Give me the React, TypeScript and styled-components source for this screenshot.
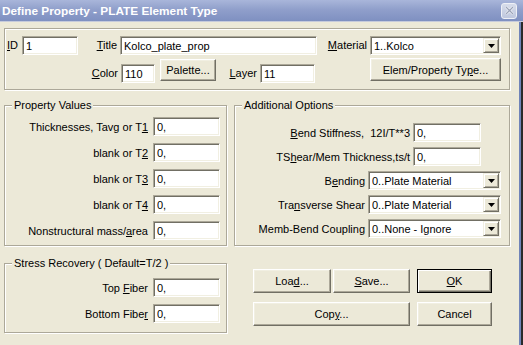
import React from 'react';
import styled, { createGlobalStyle } from 'styled-components';

const GlobalStyle = createGlobalStyle`
  html, body {
    margin: 0;
    padding: 0;
    background: #ece9d8;
  }
  body {
    font-family: "Liberation Sans", Arial, sans-serif;
    font-size: 11px;
    color: #000;
  }
`;

const Window = styled.div`
  width: 523px;
  height: 345px;
  overflow: hidden;
  display: flex;
  flex-direction: column;
  background: #ece9d8;
`;

const TitleBar = styled.div`
  flex: none;
  height: 21px;
  display: flex;
  align-items: center;
  justify-content: space-between;
  padding: 0 6px 0 2px;
  background: linear-gradient(#a9b6da, #909fcb 45%, #7f90c1);
  border-bottom: 1px solid #c6cbdc;
`;

const TitleText = styled.span`
  color: #fff;
  font-weight: bold;
  font-size: 11.8px;
`;

const CloseButton = styled.span`
  box-sizing: border-box;
  width: 16px;
  height: 16px;
  border: 1px solid #eef0f6;
  border-radius: 3px;
  background: linear-gradient(#d7dcea, #bfc7de);
  display: flex;
  align-items: center;
  justify-content: center;
`;

const Frame = styled.div`
  flex: 1;
  display: flex;
`;

const Content = styled.div`
  flex: 1;
  padding: 6px 0 0 4px;
`;

const RightEdge = styled.div`
  flex: none;
  width: 4px;
  background: linear-gradient(to right, #7084b8 0 2px, #2a2a2a 2px);
`;

const TopGroup = styled.div`
  box-sizing: border-box;
  width: 506px;
  height: 62px;
  border: 1px solid #aca899;
  box-shadow: 1px 1px 0 #fff, inset 1px 1px 0 #fff;
  padding: 7px 0 0 0;
  display: flex;
  flex-direction: column;
  gap: 3px;
`;

const TopRow = styled.div`
  display: flex;
  align-items: flex-start;
`;

const LowerTopRow = styled(TopRow)`
  & > input,
  & > label {
    margin-top: 6px;
  }
`;

const Caption = styled.label<{ $w: number; $left?: boolean }>`
  flex: none;
  box-sizing: border-box;
  width: ${(p) => p.$w}px;
  height: 19px;
  line-height: 19px;
  white-space: nowrap;
  text-align: ${(p) => (p.$left ? 'left' : 'right')};
  padding: ${(p) => (p.$left ? '0 0 0 2px' : '0 3px 0 0')};
`;

const Key = styled.u`
  text-decoration-thickness: 1px;
  text-underline-offset: 1px;
`;

const Field = styled.input<{ $w: number }>`
  flex: none;
  box-sizing: border-box;
  width: ${(p) => p.$w}px;
  height: 19px;
  margin: 0;
  padding: 1px 3px 0;
  font: inherit;
  color: #000;
  background: #fff;
  border: 1px solid;
  border-color: #aca899 #fff #fff #aca899;
  box-shadow: inset 1px 1px 0 #716f64, inset -1px -1px 0 #f1efe2;
  outline: none;
`;

const Combo = styled.div<{ $w: number }>`
  flex: none;
  box-sizing: border-box;
  width: ${(p) => p.$w}px;
  height: 19px;
  display: flex;
  align-items: center;
  padding: 0 1px 0 3px;
  background: #fff;
  border: 1px solid;
  border-color: #aca899 #fff #fff #aca899;
  box-shadow: inset 1px 1px 0 #716f64, inset -1px -1px 0 #f1efe2;
`;

const ComboText = styled.span`
  flex: 1;
  white-space: nowrap;
  overflow: hidden;
`;

const DropButton = styled.span`
  flex: none;
  box-sizing: border-box;
  width: 16px;
  height: 15px;
  display: flex;
  align-items: center;
  justify-content: center;
  background: #ece9d8;
  border: 1px solid;
  border-color: #f1efe2 #716f64 #716f64 #f1efe2;
  box-shadow: inset 1px 1px 0 #fff, inset -1px -1px 0 #aca899;
`;

const Button = styled.button<{ $w: number; $h: number; $default?: boolean }>`
  flex: none;
  box-sizing: border-box;
  width: ${(p) => p.$w}px;
  height: ${(p) => p.$h}px;
  margin: 0;
  padding: 0;
  font: inherit;
  color: #000;
  background: #ece9d8;
  border: 1px solid;
  border-color: ${(p) => (p.$default ? '#000' : '#fff #716f64 #716f64 #fff')};
  box-shadow: ${(p) =>
    p.$default
      ? 'inset 1px 1px 0 #fff, inset -1px -1px 0 #716f64, inset -2px -2px 0 #aca899'
      : 'inset -1px -1px 0 #aca899, inset 1px 1px 0 #f1efe2'};
`;

const PaletteButton = styled(Button)`
  margin: 1px 0 0 5px;
`;

const ElemButton = styled(Button)`
  margin-left: 55px;
`;

const MiddleRow = styled.div`
  display: flex;
  gap: 7px;
  margin-top: 9px;
`;

const BottomRow = styled.div`
  display: flex;
  align-items: flex-start;
  margin-top: 11px;
`;

const Group = styled.fieldset<{ $w: number }>`
  box-sizing: border-box;
  width: ${(p) => p.$w}px;
  min-width: 0;
  margin: 0;
  padding: 0;
  border: 1px solid #aca899;
  box-shadow: 1px 1px 0 #fff, inset 1px 1px 0 #fff;
`;

const Legend = styled.legend`
  margin-left: 7px;
  padding: 0 2px;
  line-height: 13px;
  background: #ece9d8;
  white-space: nowrap;
`;

const FormGrid = styled.div<{ $top: number; $bottom: number }>`
  display: grid;
  grid-template-columns: 148px 67px;
  row-gap: 7px;
  align-items: center;
  padding: ${(p) => `${p.$top}px 0 ${p.$bottom}px 0`};
`;

const GridLabel = styled.label`
  text-align: right;
  padding-right: 5px;
  white-space: nowrap;
`;

const OptionList = styled.div`
  display: flex;
  flex-direction: column;
  gap: 5px;
  padding: 11px 0 7px 0;
`;

const OptionRow = styled.div<{ $pr: number }>`
  display: flex;
  align-items: center;
  justify-content: flex-end;
  height: 19px;
  padding-right: ${(p) => p.$pr}px;
`;

const OptionLabel = styled.label`
  margin-right: 3px;
  white-space: nowrap;
`;

const ButtonArea = styled.div`
  display: flex;
  gap: 7px;
  margin: 12px 0 0 26px;
`;

const ButtonGrid = styled.div<{ $cols: string }>`
  display: grid;
  grid-template-columns: ${(p) => p.$cols};
  column-gap: 2px;
  row-gap: 9px;
`;

const WideCell = styled.div`
  grid-column: span 2;
  display: flex;
`;

function Arrow() {
  return (
    <svg width="7" height="4" viewBox="0 0 7 4">
      <polygon points="0,0 7,0 3.5,4" fill="#000" />
    </svg>
  );
}

function Select({ w, value }: { w: number; value: string }) {
  return (
    <Combo $w={w}>
      <ComboText>{value}</ComboText>
      <DropButton>
        <Arrow />
      </DropButton>
    </Combo>
  );
}

export default function App() {
  return (
    <>
      <GlobalStyle />
      <Window>
        <TitleBar>
          <TitleText>Define Property - PLATE Element Type</TitleText>
          <CloseButton>
            <svg width="9" height="9" viewBox="0 0 9 9">
              <path d="M1 1 L8 8 M8 1 L1 8" stroke="#fff" strokeWidth="2.4" />
              <path d="M1 1 L8 8 M8 1 L1 8" stroke="#9aa2b8" strokeWidth="1.3" />
            </svg>
          </CloseButton>
        </TitleBar>
        <Frame>
          <Content>
            <TopGroup>
              <TopRow>
                <Caption $w={17} $left>
                  <Key>I</Key>D
                </Caption>
                <Field $w={56} value="1" readOnly />
                <Caption $w={42}>
                  <Key>T</Key>itle
                </Caption>
                <Field $w={197} value="Kolco_plate_prop" readOnly />
                <Caption $w={53}>
                  <Key>M</Key>aterial
                </Caption>
                <Select w={131} value="1..Kolco" />
              </TopRow>
              <LowerTopRow>
                <Caption $w={116}>
                  <Key>C</Key>olor
                </Caption>
                <Field $w={34} value="110" readOnly />
                <PaletteButton $w={56} $h={22}>
                  Palette...
                </PaletteButton>
                <Caption $w={44}>
                  <Key>L</Key>ayer
                </Caption>
                <Field $w={55} value="11" readOnly />
                <ElemButton $w={131} $h={23}>
                  Elem/Property Ty<Key>p</Key>e...
                </ElemButton>
              </LowerTopRow>
            </TopGroup>

            <MiddleRow>
              <Group $w={223}>
                <Legend>Property Values</Legend>
                <FormGrid $top={5} $bottom={5}>
                  <GridLabel>
                    Thicknesses, Tavg or T<Key>1</Key>
                  </GridLabel>
                  <Field $w={67} value="0," readOnly />
                  <GridLabel>
                    blank or T<Key>2</Key>
                  </GridLabel>
                  <Field $w={67} value="0," readOnly />
                  <GridLabel>
                    blank or T<Key>3</Key>
                  </GridLabel>
                  <Field $w={67} value="0," readOnly />
                  <GridLabel>
                    blank or T<Key>4</Key>
                  </GridLabel>
                  <Field $w={67} value="0," readOnly />
                  <GridLabel>
                    Nonstructural mass/<Key>a</Key>rea
                  </GridLabel>
                  <Field $w={67} value="0," readOnly />
                </FormGrid>
              </Group>

              <Group $w={276}>
                <Legend>Additional Options</Legend>
                <OptionList>
                  <OptionRow $pr={28}>
                    <OptionLabel>
                      <Key>B</Key>end Stiffness,&nbsp; 12I/T**3
                    </OptionLabel>
                    <Field $w={68} value="0," readOnly />
                  </OptionRow>
                  <OptionRow $pr={28}>
                    <OptionLabel>
                      TS<Key>h</Key>ear/Mem Thickness,ts/t
                    </OptionLabel>
                    <Field $w={68} value="0," readOnly />
                  </OptionRow>
                  <OptionRow $pr={8}>
                    <OptionLabel>
                      B<Key>e</Key>nding
                    </OptionLabel>
                    <Select w={133} value="0..Plate Material" />
                  </OptionRow>
                  <OptionRow $pr={8}>
                    <OptionLabel>
                      Tra<Key>n</Key>sverse Shear
                    </OptionLabel>
                    <Select w={133} value="0..Plate Material" />
                  </OptionRow>
                  <OptionRow $pr={8}>
                    <OptionLabel>Memb-Bend Coupling</OptionLabel>
                    <Select w={133} value="0..None - Ignore" />
                  </OptionRow>
                </OptionList>
              </Group>
            </MiddleRow>

            <BottomRow>
              <Group $w={223}>
                <Legend>Stress Recovery ( Default=T/2 )</Legend>
                <FormGrid $top={8} $bottom={9}>
                  <GridLabel>
                    Top <Key>F</Key>iber
                  </GridLabel>
                  <Field $w={67} value="0," readOnly />
                  <GridLabel>
                    Bottom Fibe<Key>r</Key>
                  </GridLabel>
                  <Field $w={67} value="0," readOnly />
                </FormGrid>
              </Group>

              <ButtonArea>
                <ButtonGrid $cols="78px 77px">
                  <Button $w={78} $h={24}>
                    Loa<Key>d</Key>...
                  </Button>
                  <Button $w={77} $h={24}>
                    <Key>S</Key>ave...
                  </Button>
                  <WideCell>
                    <Button $w={157} $h={24}>
                      Cop<Key>y</Key>...
                    </Button>
                  </WideCell>
                </ButtonGrid>
                <ButtonGrid $cols="75px">
                  <Button $w={75} $h={24} $default>
                    <Key>O</Key>K
                  </Button>
                  <Button $w={75} $h={24}>
                    Cancel
                  </Button>
                </ButtonGrid>
              </ButtonArea>
            </BottomRow>
          </Content>
          <RightEdge />
        </Frame>
      </Window>
    </>
  );
}
